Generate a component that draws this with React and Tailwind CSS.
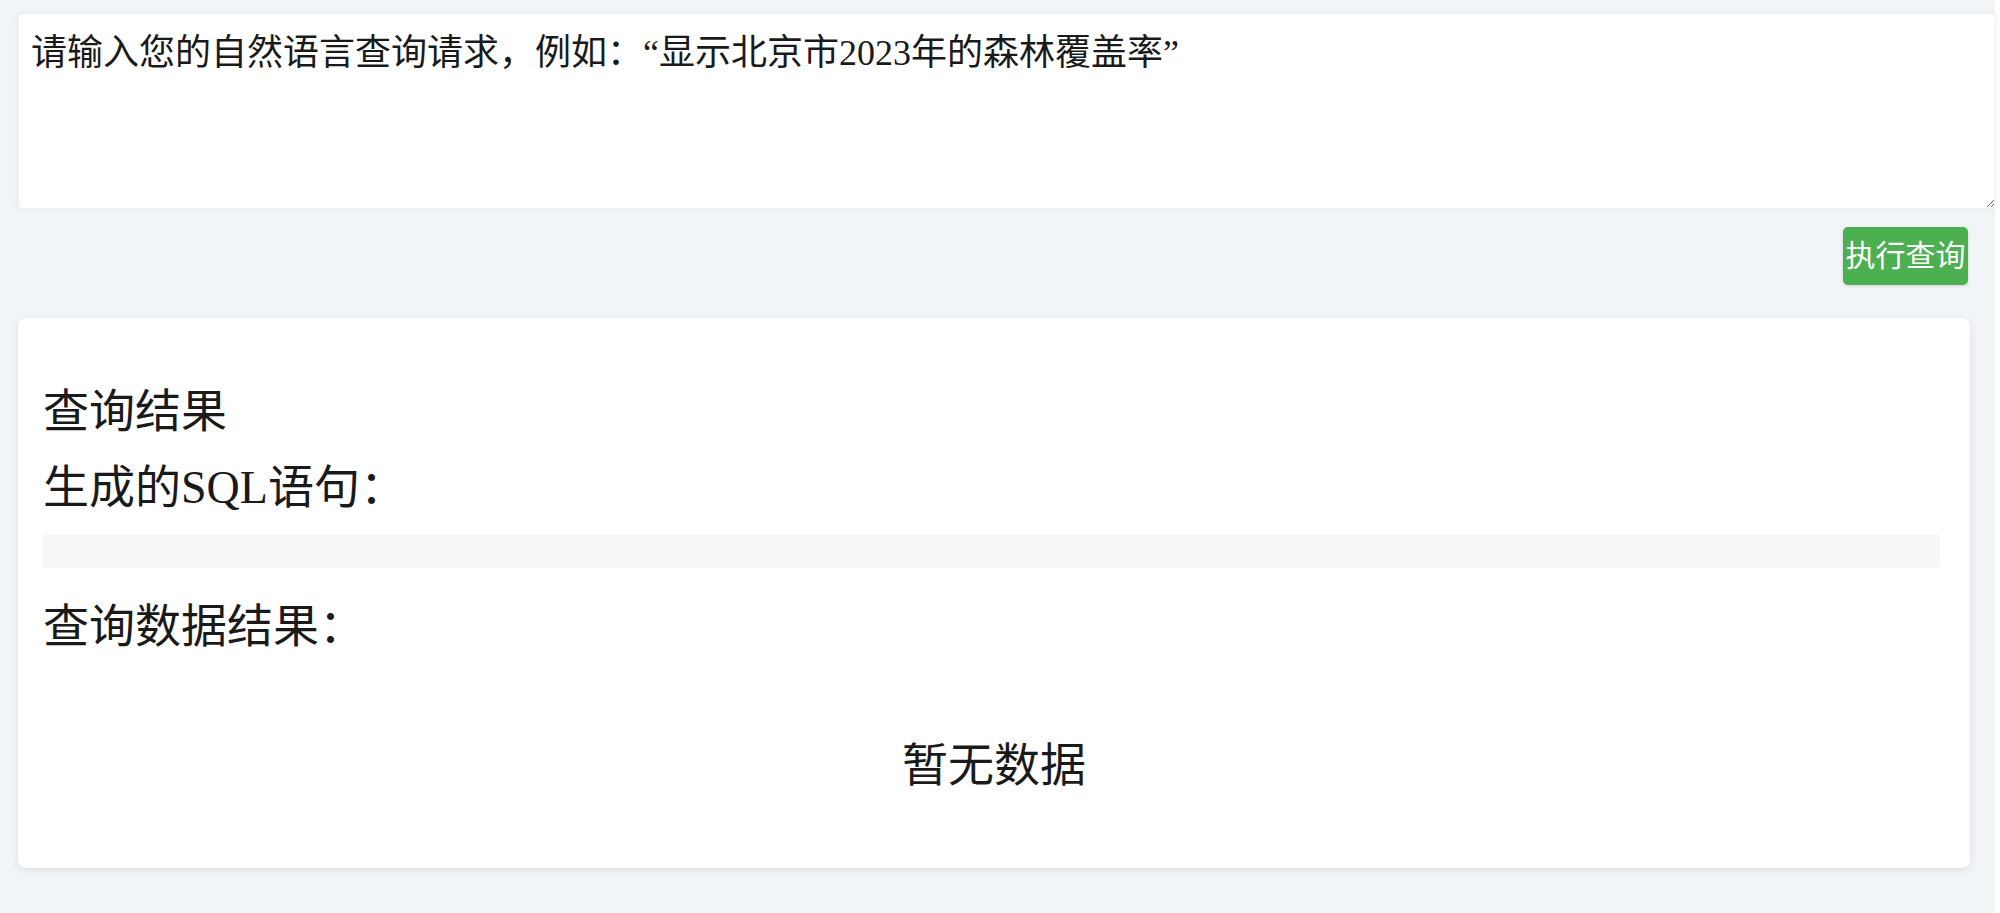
import React from "react";

export default function App() {
  return (
    <div className="w-full min-h-[913px] bg-white font-['Liberation_Serif','Noto_Sans_CJK_SC',serif] text-[#1a1a1a]">
      <div className="w-[1995px] min-h-[913px] bg-[#f2f5f8] pt-[13px] pl-[18px] pr-[25px] pb-[45px]">
        <textarea
          className="block w-[1978px] h-[196px] bg-white rounded-[4px] border border-[#eef0f2] shadow-[0_0_6px_rgba(0,0,0,0.06)] pl-[12px] pt-[17px] pr-[14px] text-[36px] leading-[44px] text-[#1a1a1a] placeholder:text-[#1a1a1a] outline-none font-['Liberation_Serif','Noto_Sans_CJK_SC',serif]"
          placeholder="请输入您的自然语言查询请求，例如：“显示北京市2023年的森林覆盖率”"
        />
        <div className="flex justify-end mt-[18px] pr-[2px]">
          <button className="w-[125px] h-[58px] bg-[#4caf50] text-white text-[30px] leading-[58px] rounded-[5px] shadow-[0_1px_3px_rgba(0,0,0,0.15)] flex items-center justify-center p-0 whitespace-nowrap">
            执行查询
          </button>
        </div>
        <div className="mt-[33px] bg-white rounded-[8px] shadow-[0_2px_8px_rgba(0,0,0,0.09)] px-[25px] pt-[68px] pb-[76px]">
          <div className="text-[46px] leading-[52px]">查询结果</div>
          <div className="mt-[24px] text-[46px] leading-[52px]">生成的SQL语句：</div>
          <pre className="mt-[21px] mr-[5px] h-[33px] bg-[#f6f6f6] rounded-[3px]"></pre>
          <div className="mt-[33px] text-[46px] leading-[52px]">查询数据结果：</div>
          <div className="mt-[87px] text-[46px] leading-[52px] text-center">暂无数据</div>
        </div>
      </div>
    </div>
  );
}
